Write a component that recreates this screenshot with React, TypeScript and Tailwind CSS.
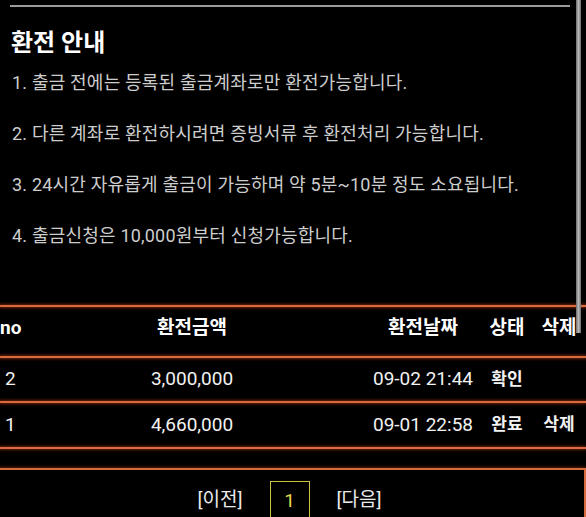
import React from "react";

type Row = { no: number; amount: string; date: string; status: string; canDelete: boolean };

const notices = [
  "1. 출금 전에는 등록된 출금계좌로만 환전가능합니다.",
  "2. 다른 계좌로 환전하시려면 증빙서류 후 환전처리 가능합니다.",
  "3. 24시간 자유롭게 출금이 가능하며 약 5분~10분 정도 소요됩니다.",
  "4. 출금신청은 10,000원부터 신청가능합니다.",
];

const rows: Row[] = [
  { no: 2, amount: "3,000,000", date: "09-02 21:44", status: "확인", canDelete: false },
  { no: 1, amount: "4,660,000", date: "09-01 22:58", status: "완료", canDelete: true },
];

const cols = "grid grid-cols-[19px_346px_116px_52px_52px] w-[585px]";

function Divider() {
  return <div className="h-[2px] w-full bg-[#d66c3e] shadow-[0_0_3px_1px_rgba(150,45,15,0.75)]" />;
}

export default function App() {
  return (
    <div className="relative w-[586px] h-[517px] overflow-hidden bg-black font-[Roboto,'Noto_Sans_CJK_KR',sans-serif]">
      {/* top rule */}
      <div className="ml-[10px] mt-[5px] h-[2px] w-[560px] bg-[#9b9b9b]" />

      <h1 className="ml-[11px] mt-[21px] text-[24px] leading-[30px] font-bold text-white">환전 안내</h1>

      <ul className="ml-[12px] mt-[13px] flex flex-col gap-[27px] text-[18px] leading-[24px] tracking-[0.2px] text-[#cdcdcd]">
        {notices.map((n) => (
          <li key={n} className="whitespace-nowrap">{n}</li>
        ))}
      </ul>

      {/* history table */}
      <div className="mt-[57px]">
        <Divider />
        <div className={`${cols} h-[49px] items-center pb-[6px] text-[19px] font-bold text-white`}>
          <div className="text-left">no</div>
          <div className="text-center">환전금액</div>
          <div className="text-center">환전날짜</div>
          <div className="text-center">상태</div>
          <div className="text-center">삭제</div>
        </div>
        <Divider />
        {rows.map((r, i) => (
          <React.Fragment key={r.no}>
            <div className={`${cols} ${i === 0 ? "h-[43px]" : "h-[44px]"} items-center text-[#f2f2f2]`}>
              <div className="pl-[5px] text-[19px]">{r.no}</div>
              <div className="text-center text-[19px]">{r.amount}</div>
              <div className="text-center text-[19px] whitespace-nowrap">{r.date}</div>
              <div className="text-center text-[17px] font-bold">{r.status}</div>
              <div className="text-center text-[17px] font-bold">{r.canDelete ? "삭제" : ""}</div>
            </div>
            <Divider />
          </React.Fragment>
        ))}
      </div>

      {/* pagination */}
      <div className="mt-[19px] -ml-[2px] w-[588px] h-[60px] border-t-2 border-r-2 border-[#d66c3e] shadow-[0_0_3px_1px_rgba(150,45,15,0.6)]">
        <div className="flex items-start justify-center gap-[27px] pr-[3px] pt-[11px] text-[19px] text-[#ebebeb]">
          <span className="mt-[6px] leading-[26px]">[이전]</span>
          <span className="w-[40px] h-[40px] border-[1.5px] border-[#cbc23c] pt-[6px] text-center leading-[26px] text-[#e6d64c]">1</span>
          <span className="mt-[6px] leading-[26px]">[다음]</span>
        </div>
      </div>

      {/* scroll indicator */}
      <div className="absolute left-[576px] top-0 w-[5px] h-[333px] bg-gradient-to-r from-[#6c6c6c] via-[#b8b8b8] to-[#6c6c6c]" />
    </div>
  );
}
